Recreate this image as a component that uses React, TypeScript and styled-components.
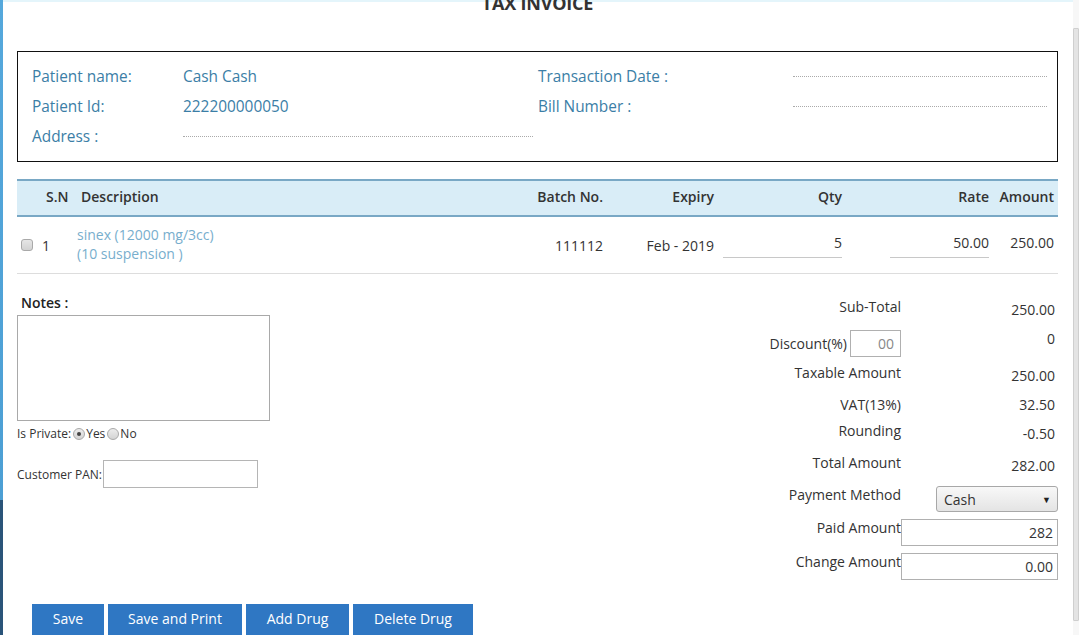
import React from "react";
import styled, { createGlobalStyle } from "styled-components";

const GlobalStyle = createGlobalStyle`
  html, body {
    margin: 0;
    padding: 0;
    height: 635px;
    overflow: hidden;
    background: #ffffff;
    font-family: "Open Sans", "Noto Sans", "Liberation Sans", sans-serif;
    color: #333333;
  }
  * { box-sizing: border-box; }
`;

const Shell = styled.div`
  display: flex;
  height: 635px;
  overflow: hidden;
`;

const Stripe = styled.div`
  width: 3px;
  flex: none;
  background: linear-gradient(to bottom, #55a8dc 0, #4c9fd4 500px, #2a5479 500px, #2a5479 100%);
`;

const Main = styled.div`
  flex: 1;
  min-width: 0;
  border-top: 2px solid #e4f5fb;
  padding: 0 15px 0 14px;
`;

const ScrollTrack = styled.div`
  width: 6px;
  flex: none;
  background: #f7f7f7;
  padding: 28px 0 14px 0;
  display: flex;
`;

const ScrollThumb = styled.div`
  flex: 1;
  background: #e4e4e4;
  border: 1px solid #cfcfcf;
  border-radius: 1px;
`;

const Title = styled.h4`
  margin: -10px 0 0;
  line-height: 22px;
  font-size: 18px;
  font-weight: 700;
  text-align: center;
  color: #333;
  letter-spacing: -0.2px;
  height: 22px;
`;

const InfoBox = styled.div`
  margin-top: 37px;
  border: 1px solid #111;
  padding: 9px 10px 10px 14px;
  display: grid;
  grid-template-columns: 151px 355px 255px 1fr;
  grid-auto-rows: 30px;
  align-items: center;
  font-size: 15.4px;
  color: #3b7ea6;
`;

const InfoText = styled.span`
  white-space: nowrap;
`;

const Dotted = styled.div<{ $gap?: number }>`
  border-bottom: 1px dotted #aaa;
  margin-right: ${(p) => p.$gap ?? 0}px;
  height: 1px;
`;

const cols = "60px 423px 108px 111px 128px 147px 64px";

const HeadRow = styled.div`
  margin-top: 17px;
  display: grid;
  grid-template-columns: ${cols};
  height: 38px;
  align-items: center;
  padding-bottom: 3px;
  background: #d9edf7;
  border-top: 2px solid #79a8c5;
  border-bottom: 2px solid #79a8c5;
  font-size: 14px;
  font-weight: 600;
  color: #333;
`;

const BodyRow = styled.div`
  display: grid;
  grid-template-columns: ${cols};
  height: 57px;
  align-items: center;
  border-bottom: 1px solid #dddddd;
  font-size: 14px;
  color: #333;
`;

const Cell = styled.div<{ $align?: string; $pl?: number; $pr?: number; $pb?: number }>`
  text-align: ${(p) => p.$align ?? "left"};
  padding-left: ${(p) => p.$pl ?? 0}px;
  padding-right: ${(p) => p.$pr ?? 0}px;
  padding-bottom: ${(p) => p.$pb ?? 0}px;
  white-space: nowrap;
`;

const CheckCell = styled.div`
  display: flex;
  align-items: center;
  padding-left: 4px;
  gap: 9px;
`;

const FakeCheck = styled.span`
  display: inline-block;
  width: 12px;
  height: 12px;
  border: 1px solid #a9a9a9;
  border-radius: 3px;
  background: linear-gradient(#e6e6e6, #d2d2d2);
`;

const DrugName = styled.div`
  color: #78aecd;
  font-size: 14px;
  line-height: 19px;
  margin-top: -3px;
`;

const LineInput = styled.div<{ $ml: number; $mr: number }>`
  margin-left: ${(p) => p.$ml}px;
  margin-right: ${(p) => p.$mr}px;
  height: 28px;
  margin-top: -2px;
  border-bottom: 1px solid #c8c8c8;
  text-align: right;
  line-height: 26px;
  font-size: 14px;
`;

const Bottom = styled.div`
  display: flex;
  padding-top: 19px;
`;

const LeftCol = styled.div`
  width: 253px;
  flex: none;
  display: flex;
  flex-direction: column;
`;

const NotesLabel = styled.div`
  margin-left: 4px;
  font-size: 14px;
  font-weight: 600;
  line-height: 20px;
  color: #222;
`;

const NotesArea = styled.div`
  margin-top: 2px;
  height: 106px;
  border: 1px solid #a9a9a9;
`;

const PrivateRow = styled.div`
  margin-top: 5px;
  display: flex;
  align-items: center;
  font-size: 12px;
  line-height: 16px;
  color: #333;
`;

const Radio = styled.span<{ $on?: boolean }>`
  display: inline-block;
  position: relative;
  width: 12px;
  height: 12px;
  border-radius: 50%;
  border: 1px solid #a9a9a9;
  background: linear-gradient(#ececec, #d4d4d4);
  margin: 0 1px 0 2px;
  &::after {
    content: "";
    display: ${(p) => (p.$on ? "block" : "none")};
    position: absolute;
    left: 3px;
    top: 3px;
    width: 4px;
    height: 4px;
    border-radius: 50%;
    background: #444;
  }
`;

const PanRow = styled.div`
  margin-top: 18px;
  display: flex;
  align-items: center;
  font-size: 12px;
  color: #333;
`;

const PanInput = styled.div`
  margin-left: 1px;
  width: 155px;
  height: 28px;
  border: 1px solid #b5b5b5;
`;

const RightCol = styled.div`
  flex: 1;
  margin-top: 2px;
  display: grid;
  grid-template-columns: 1fr 157px;
  font-size: 14px;
  color: #333;
`;

const SumLabel = styled.div<{ $h: number; $pt: number }>`
  height: ${(p) => p.$h}px;
  padding-top: ${(p) => p.$pt}px;
  line-height: 20px;
  text-align: right;
  white-space: nowrap;
`;

const SumValue = styled.div<{ $h: number; $pt: number }>`
  height: ${(p) => p.$h}px;
  padding-top: ${(p) => p.$pt}px;
  padding-right: 3px;
  line-height: 20px;
  text-align: right;
`;

const DiscLabel = styled.div`
  height: 35px;
  display: flex;
  justify-content: flex-end;
  align-items: center;
  gap: 3px;
  padding-top: 2px;
  white-space: nowrap;
`;

const DiscInput = styled.div`
  width: 51px;
  height: 27px;
  border: 1px solid #b0b0b0;
  color: #888;
  text-align: right;
  padding-right: 6px;
  line-height: 25px;
`;

const SelectBox = styled.div`
  margin: 6px 0 0 35px;
  height: 26px;
  border: 1px solid #a8a8a8;
  border-radius: 3px;
  background: linear-gradient(#f8f8f8, #e4e4e4);
  display: flex;
  align-items: center;
  justify-content: space-between;
  padding: 0 6px 0 7px;
  font-size: 14px;
`;

const Arrow = styled.span`
  font-size: 9px;
  color: #222;
`;

const BoxInput = styled.div`
  margin-top: 4px;
  height: 27px;
  border: 1px solid #b0b0b0;
  text-align: right;
  padding-right: 4px;
  line-height: 25px;
`;

const Buttons = styled.div`
  margin-top: 21px;
  padding-left: 15px;
  display: flex;
  gap: 4px;
`;

const Btn = styled.button<{ $w: number }>`
  width: ${(p) => p.$w}px;
  height: 34px;
  padding: 0 0 4px;
  border: none;
  background: #2f77c3;
  color: #ffffff;
  font-family: inherit;
  font-size: 14px;
  line-height: 30px;
  text-align: center;
  cursor: pointer;
`;

export default function App() {
  return (
    <>
      <GlobalStyle />
      <Shell>
        <Stripe />
        <Main>
          <Title>TAX INVOICE</Title>
          <InfoBox>
            <InfoText>Patient name:</InfoText>
            <InfoText>Cash Cash</InfoText>
            <InfoText>Transaction Date :</InfoText>
            <Dotted />
            <InfoText>Patient Id:</InfoText>
            <InfoText>222200000050</InfoText>
            <InfoText>Bill Number :</InfoText>
            <Dotted />
            <InfoText>Address :</InfoText>
            <Dotted $gap={5} />
            <span />
            <span />
          </InfoBox>

          <HeadRow>
            <Cell $pl={29}>S.N</Cell>
            <Cell $pl={4}>Description</Cell>
            <Cell $align="right" $pr={5}>Batch No.</Cell>
            <Cell $align="right" $pr={5}>Expiry</Cell>
            <Cell $align="right" $pr={5}>Qty</Cell>
            <Cell $align="right" $pr={5}>Rate</Cell>
            <Cell $align="right" $pr={4}>Amount</Cell>
          </HeadRow>
          <BodyRow>
            <CheckCell>
              <FakeCheck />
              <span>1</span>
            </CheckCell>
            <DrugName>
              sinex (12000 mg/3cc)
              <br />
              (10 suspension )
            </DrugName>
            <Cell $align="right" $pr={5}>111112</Cell>
            <Cell $align="right" $pr={5}>Feb - 2019</Cell>
            <LineInput $ml={4} $mr={5}>5</LineInput>
            <LineInput $ml={43} $mr={5}>50.00</LineInput>
            <Cell $align="right" $pr={4} $pb={6}>250.00</Cell>
          </BodyRow>

          <Bottom>
            <LeftCol>
              <NotesLabel>Notes :</NotesLabel>
              <NotesArea />
              <PrivateRow>
                Is Private:
                <Radio $on />
                Yes
                <Radio />
                No
              </PrivateRow>
              <PanRow>
                Customer PAN:
                <PanInput />
              </PanRow>
            </LeftCol>
            <RightCol>
              <SumLabel $h={30} $pt={2}>Sub-Total</SumLabel>
              <SumValue $h={30} $pt={5}>250.00</SumValue>

              <DiscLabel>
                <span>Discount(%)</span>
                <DiscInput>00</DiscInput>
              </DiscLabel>
              <SumValue $h={35} $pt={4}>0</SumValue>

              <SumLabel $h={30} $pt={3}>Taxable Amount</SumLabel>
              <SumValue $h={30} $pt={6}>250.00</SumValue>

              <SumLabel $h={28} $pt={5}>VAT(13%)</SumLabel>
              <SumValue $h={28} $pt={5}>32.50</SumValue>

              <SumLabel $h={29} $pt={3}>Rounding</SumLabel>
              <SumValue $h={29} $pt={6}>-0.50</SumValue>

              <SumLabel $h={33} $pt={6}>Total Amount</SumLabel>
              <SumValue $h={33} $pt={9}>282.00</SumValue>

              <SumLabel $h={35} $pt={5}>Payment Method</SumLabel>
              <div>
                <SelectBox>
                  <span>Cash</span>
                  <Arrow>▼</Arrow>
                </SelectBox>
              </div>

              <SumLabel $h={34} $pt={3}>Paid Amount</SumLabel>
              <BoxInput>282</BoxInput>

              <SumLabel $h={34} $pt={3}>Change Amount</SumLabel>
              <BoxInput>0.00</BoxInput>
            </RightCol>
          </Bottom>

          <Buttons>
            <Btn $w={72}>Save</Btn>
            <Btn $w={134}>Save and Print</Btn>
            <Btn $w={103}>Add Drug</Btn>
            <Btn $w={120}>Delete Drug</Btn>
          </Buttons>
        </Main>
        <ScrollTrack>
          <ScrollThumb />
        </ScrollTrack>
      </Shell>
    </>
  );
}
